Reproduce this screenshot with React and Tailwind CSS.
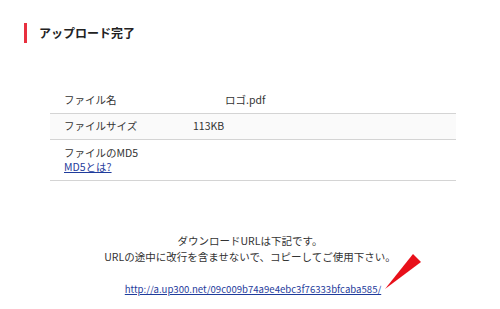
export default function App() {
  const font = "font-['Noto_Sans_CJK_JP','Noto_Sans',sans-serif]"

  return (
    <div className={`relative h-[309px] w-[500px] overflow-hidden bg-white text-[#333] ${font}`}>
      <div className="pl-[24px] pt-[23px]">
        <h2 className="h-[20px] border-l-[3px] border-[#e8303f] pl-[12px] text-[12px] font-bold leading-[20px] text-[#222]">
          アップロード完了
        </h2>
      </div>

      <table className="ml-[50px] mt-[44px] w-[406px] border-collapse text-[10.5px]">
        <tbody>
          <tr className="h-[26px] border-b border-[#d4d4d4]">
            <td className="w-[129px] pl-[14px] align-middle">ファイル名</td>
            <td className="pl-[46px] align-middle">ロゴ.pdf</td>
          </tr>
          <tr className="h-[26px] border-b border-[#d4d4d4] bg-[#fafafa]">
            <td className="pl-[14px] align-middle">ファイルサイズ</td>
            <td className="pl-[14px] align-middle">113KB</td>
          </tr>
          <tr className="h-[41px] border-b border-[#d4d4d4]">
            <td className="pl-[14px] align-middle leading-[14px]" colSpan={2}>
              <div>ファイルのMD5</div>
              <a href="#" className="text-[#1f3c9c] underline">
                MD5とは?
              </a>
            </td>
          </tr>
        </tbody>
      </table>

      <div className="mt-[52px] flex flex-col items-center text-[10.5px] leading-[16px]">
        <p>ダウンロードURLは下記です。</p>
        <p>URLの途中に改行を含ませないで、コピーしてご使用下さい。</p>
        <a href="#" className="mt-[16px] ml-[6px] text-[9.6px] text-[#1f3c9c] underline">
          http://a.up300.net/09c009b74a9e4ebc3f76333bfcaba585/
        </a>
      </div>

      <svg className="absolute left-0 top-0" width="500" height="309" viewBox="0 0 500 309">
        <path d="M385 289 L413 254 L421 262 Z" fill="#e8101a" />
      </svg>
    </div>
  )
}
